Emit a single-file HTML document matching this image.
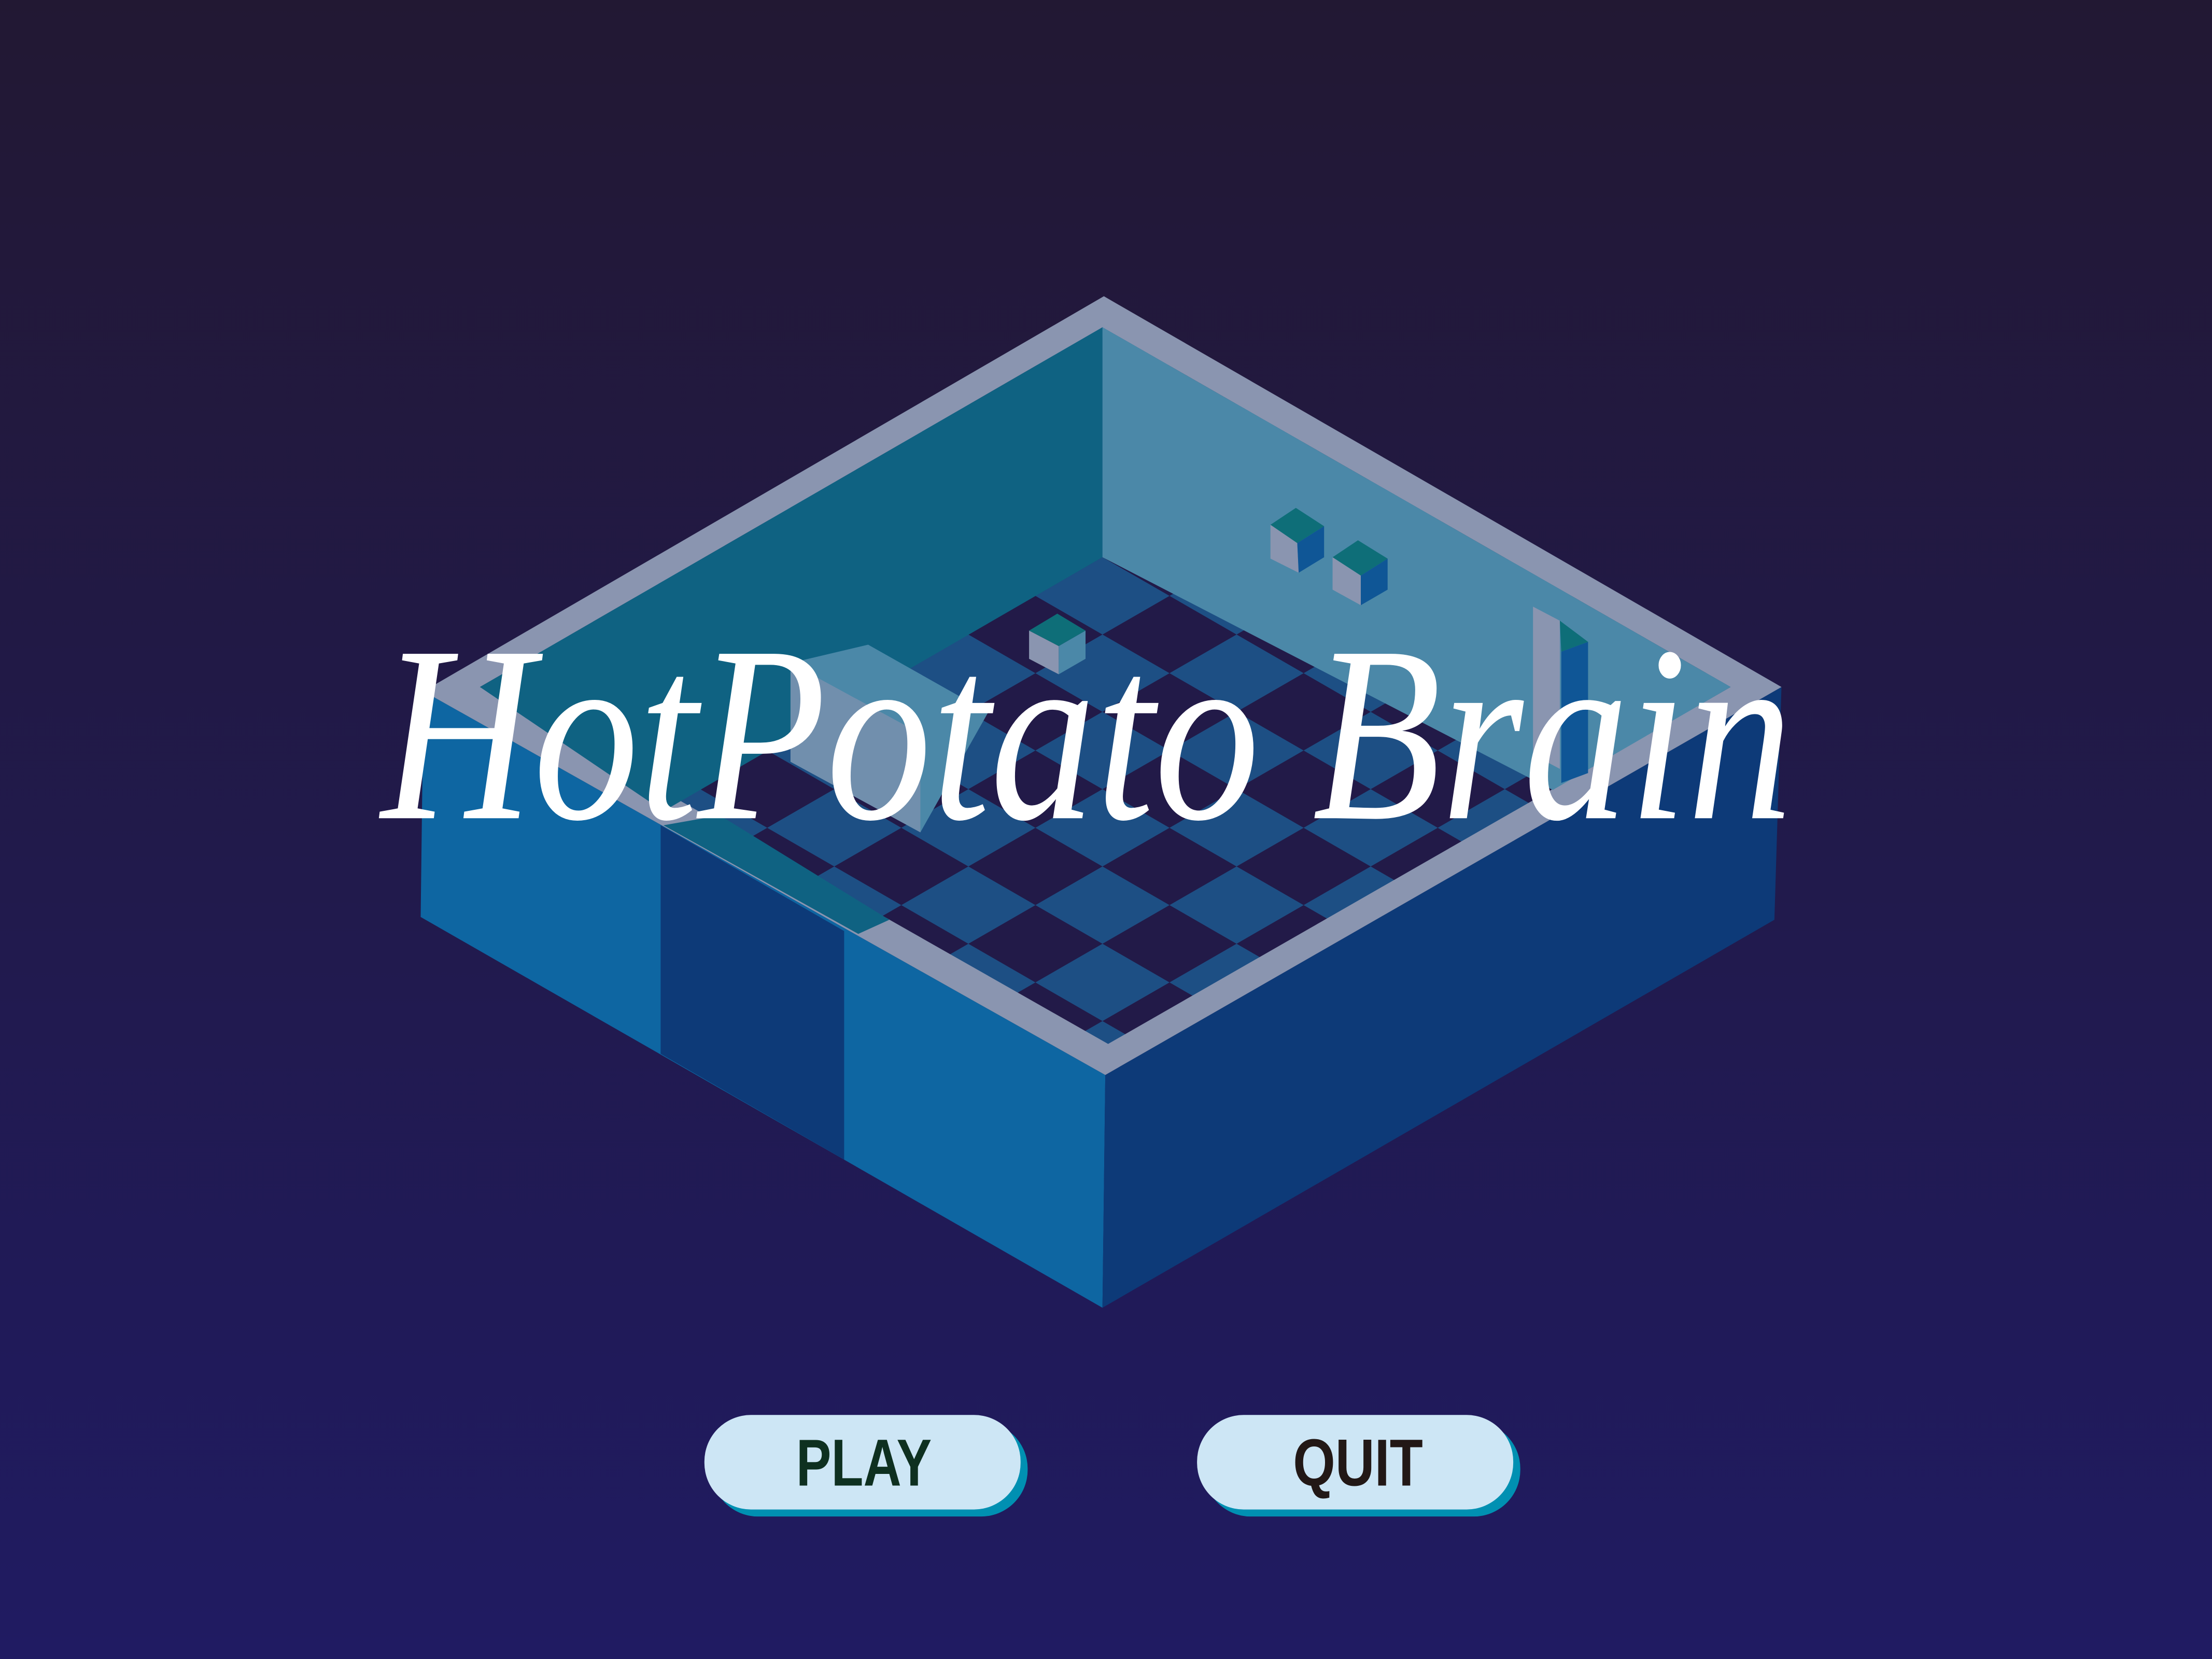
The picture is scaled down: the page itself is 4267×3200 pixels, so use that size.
<!DOCTYPE html>
<html><head><meta charset="utf-8"><style>
html,body{margin:0;padding:0;width:4267px;height:3200px;overflow:hidden}
svg{display:block}
</style></head><body>
<svg width="4267" height="3200" viewBox="0 0 1567 1176" preserveAspectRatio="none">
<defs>
<linearGradient id="bg" x1="0" y1="0" x2="0" y2="1">
<stop offset="0" stop-color="#221833"/><stop offset="1" stop-color="#201b62"/>
</linearGradient>
<pattern id="chk" patternUnits="userSpaceOnUse" width="2" height="2" patternTransform="matrix(47.5 27.4 -47.5 27.4 781 395)">
<rect width="2" height="2" fill="#221a48"/>
<rect width="1" height="1" fill="#1d4f84"/>
<rect x="1" y="1" width="1" height="1" fill="#1d4f84"/>
</pattern>
</defs>
<rect width="1567" height="1176" fill="url(#bg)"/>
<polygon points="300,490 783,762 781,927 298,650" fill="#0e66a2"/>
<polygon points="468,585 598,660 598,822 468,747" fill="#0d3a78"/>
<polygon points="783,762 1262,487 1257,652 781,927" fill="#0d3a78"/>
<polygon points="782,210 1262,487 783,762 300,490" fill="#8a95b0"/>
<polygon points="781,232 1226,487 785,740 340,487" fill="url(#chk)"/>
<polygon points="340,487 781,232 781,395 470,575" fill="#0f6282"/>
<polygon points="781,232 1226,487 1100,560 781,395" fill="#4b88a8"/>
<polygon points="560,470 615,457 700,505 652,590 560,540" fill="#4b88a8"/>
<polygon points="560,470 560,540 652,590 652,520" fill="#8a95b0" opacity="0.6"/>
<polygon points="470,585 510,578 630,652 608,662" fill="#0f6282"/>
<g>
<polygon points="900,372 918,360 938,373 919,385" fill="#0e6e78"/>
<polygon points="900,372 919,385 920,406 900,396" fill="#8a95b0"/>
<polygon points="919,385 938,373 938,395 920,406" fill="#0f5696"/>
<polygon points="944,395 962,383 983,396 964,408" fill="#0e6e78"/>
<polygon points="944,395 964,408 964,429 944,418" fill="#8a95b0"/>
<polygon points="964,408 983,396 983,418 964,429" fill="#0f5696"/>
<polygon points="729,447 749,435 769,447 750,458" fill="#0e6e78"/>
<polygon points="729,447 750,458 750,478 729,467" fill="#8a95b0"/>
<polygon points="750,458 769,447 769,467 750,478" fill="#4b88a8"/>
<polygon points="1086,430 1105,440 1105,545 1086,535" fill="#8a95b0"/>
<polygon points="1105,440 1125,455 1106,462" fill="#0e6e78"/>
<polygon points="1106,462 1125,455 1125,548 1106,555" fill="#0f5696"/>
</g>
<text x="270" y="580" font-family="Liberation Serif, serif" font-style="italic" font-size="178" fill="#fff" textLength="1000" lengthAdjust="spacingAndGlyphs">HotPotato Brain</text>
<rect x="504" y="1008" width="224" height="67" rx="33" fill="#0090b2"/>
<rect x="499" y="1003" width="224" height="67" rx="33" fill="#cde6f5"/>
<text x="612" y="1053" text-anchor="middle" font-family="Liberation Sans, sans-serif" font-weight="bold" font-size="47" fill="#0e3020" textLength="96" lengthAdjust="spacingAndGlyphs">PLAY</text>
<rect x="853" y="1008" width="224" height="67" rx="33" fill="#0090b2"/>
<rect x="848" y="1003" width="224" height="67" rx="33" fill="#cde6f5"/>
<text x="962" y="1053" text-anchor="middle" font-family="Liberation Sans, sans-serif" font-weight="bold" font-size="47" fill="#221816" textLength="92" lengthAdjust="spacingAndGlyphs">QUIT</text>
</svg>
</body></html>
